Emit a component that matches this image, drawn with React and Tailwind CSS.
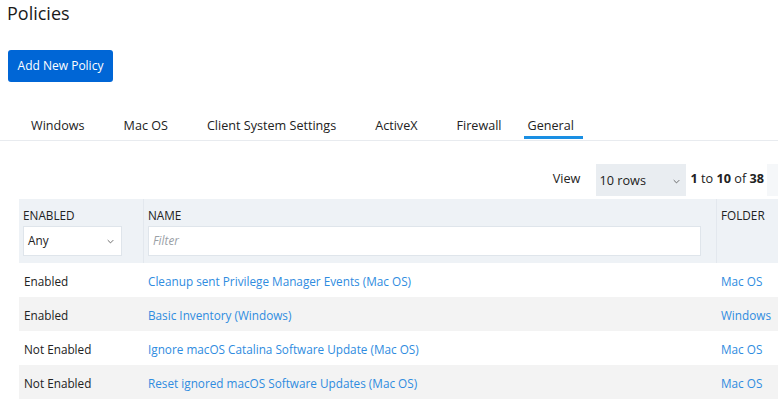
import React from "react";

const rows = [
  { enabled: "Enabled", name: "Cleanup sent Privilege Manager Events (Mac OS)", folder: "Mac OS" },
  { enabled: "Enabled", name: "Basic Inventory (Windows)", folder: "Windows" },
  { enabled: "Not Enabled", name: "Ignore macOS Catalina Software Update (Mac OS)", folder: "Mac OS" },
  { enabled: "Not Enabled", name: "Reset ignored macOS Software Updates (Mac OS)", folder: "Mac OS" },
];

const tabs = ["Windows", "Mac OS", "Client System Settings", "ActiveX", "Firewall", "General"];

const Chevron = ({ className }) => (
  <svg viewBox="0 0 10 6" className={className} fill="none" stroke="currentColor" strokeWidth="1.2">
    <path d="M1 1l4 4 4-4" />
  </svg>
);

export default function App() {
  return (
    <div className="w-[778px] h-[402px] overflow-hidden bg-white text-[#222] font-['Open_Sans',sans-serif]">
      <h1 className="pl-[7px] text-[18px] leading-[26px] font-normal text-[#1a1a1a]">Policies</h1>

      <div className="pl-2 mt-[24px]">
        <button className="h-[32px] w-[105px] rounded-[3px] bg-[#0066d6] text-white text-[12px] font-medium">
          Add New Policy
        </button>
      </div>

      <div className="mt-[30px] border-b border-[#e8ebef] flex pl-[27px] gap-[31px]">
        {tabs.map((t) => (
          <div
            key={t}
            className={`relative h-[28px] flex items-center text-[12.6px] text-[#222] ${t === "General" ? "-ml-[13px] pl-1 pr-[9px]" : "px-1"}`}
          >
            {t}
            {t === "General" && (
              <div className="absolute left-0 right-0 bottom-[1px] h-[3px] bg-[#1a8fe3]" />
            )}
          </div>
        ))}
      </div>

      <div className="mt-[23px] flex items-center justify-end h-[32px] text-[12.7px]">
        <span className="mr-4 mb-[2px]">View</span>
        <div className="w-[90px] h-[32px] bg-[#e9edf1] flex items-end justify-between pl-[3px] pr-[6px] pb-[6px]">
          <span>10 rows</span>
          <Chevron className="w-[7px] h-[5px] mb-[6px] text-[#555]" />
        </div>
        <span className="ml-1 mb-[3px]">
          <b className="font-bold">1</b> to <b className="font-bold">10</b> of <b className="font-bold">38</b>
        </span>
        <div className="ml-[3px] w-[11px] h-[32px] bg-[#f5f7f9] shrink-0" />
      </div>

      <div className="ml-[19px] mt-[3px] w-[780px] text-[11.75px]">
        <div className="flex h-[64px] bg-[#eef2f6]">
          <div className="w-[125px] border-r border-[#e3e8ee] pl-1 pr-[21px] pt-[9px]">
            <div className="leading-[14px] text-[#222]">ENABLED</div>
            <div className="mt-[4px] h-[30px] bg-white border border-[#dfe5eb] flex items-center justify-between pl-[4px] pr-[7px]">
              <span>Any</span>
              <Chevron className="w-[7px] h-[5px] text-[#555]" />
            </div>
          </div>
          <div className="w-[573px] border-r border-[#e3e8ee] pl-1 pr-[15px] pt-[9px]">
            <div className="leading-[14px] text-[#222]">NAME</div>
            <div className="mt-[4px] h-[30px] bg-white border border-[#dfe5eb] flex items-center pl-[4px]">
              <span className="italic text-[#9aa0a6]">Filter</span>
            </div>
          </div>
          <div className="flex-1 pl-1 pt-[9px]">
            <div className="leading-[14px] text-[#222]">FOLDER</div>
          </div>
        </div>
        {rows.map((r, i) => (
          <div key={i} className={`flex h-[34px] items-center pt-[4px] ${i % 2 ? "bg-[#f3f3f3]" : "bg-white"}`}>
            <div className="w-[125px] pl-[5px]">{r.enabled}</div>
            <div className="w-[573px] pl-[4px] text-[#2f8ce0]">{r.name}</div>
            <div className="flex-1 pl-1 text-[#2f8ce0]">{r.folder}</div>
          </div>
        ))}
      </div>
    </div>
  );
}
